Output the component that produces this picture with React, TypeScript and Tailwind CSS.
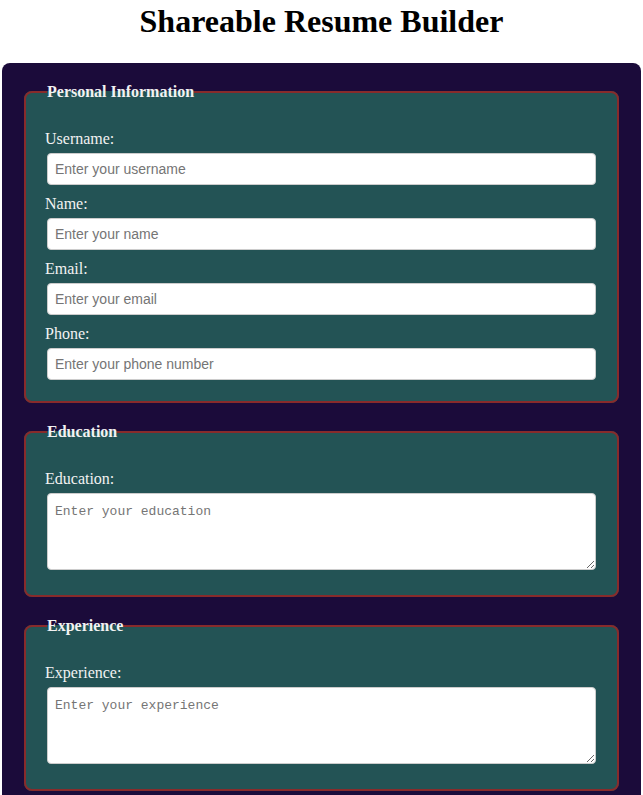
import React from "react";

const serif = { fontFamily: '"Liberation Serif", "Times New Roman", serif' };

function Field({ label, placeholder }: { label: string; placeholder: string }) {
  return (
    <>
      <label className="block mt-[10px] mb-[5px] -ml-[2px] text-[16px] leading-[18px] text-[#f2f2f2]">{label}</label>
      <input
        placeholder={placeholder}
        className="block w-full h-[32px] rounded-[4px] border border-[#cccccc] bg-white px-[7px] text-[14px] text-black placeholder:text-[#757575] outline-none"
        style={{ fontFamily: '"Liberation Sans", Arial, sans-serif' }}
      />
    </>
  );
}

function Area({ label, placeholder }: { label: string; placeholder: string }) {
  return (
    <>
      <label className="block mt-[10px] mb-[5px] -ml-[2px] text-[16px] leading-[18px] text-[#f2f2f2]">{label}</label>
      <textarea
        placeholder={placeholder}
        className="block w-full h-[77px] mb-[4px] rounded-[4px] border border-[#cccccc] bg-white px-[7px] py-[8px] text-[13px] text-black placeholder:text-[#757575] outline-none"
        style={{ fontFamily: '"Liberation Mono", "DejaVu Sans Mono", monospace' }}
      />
    </>
  );
}

function Section({ title, children }: { title: string; children: React.ReactNode }) {
  return (
    <fieldset className="mb-[20px] rounded-[8px] border-2 border-[#882b2b] bg-[#235355] px-[21px] pt-[19px] pb-[21px]">
      <legend className="px-0 text-[16px] font-bold leading-[18px] text-[#f2f2f2]">{title}</legend>
      {children}
    </fieldset>
  );
}

export default function App() {
  return (
    <div className="min-h-[795px] bg-white" style={serif}>
      <h1 className="mt-[3px] mb-[23px] text-center text-[32px] font-bold leading-[37px] text-black">
        Shareable Resume Builder
      </h1>
      <div className="mx-[2px] rounded-[8px] bg-[#1b0b3a] px-[22px] pt-[20px] pb-[20px]">
        <Section title="Personal Information">
          <Field label="Username:" placeholder="Enter your username" />
          <Field label="Name:" placeholder="Enter your name" />
          <Field label="Email:" placeholder="Enter your email" />
          <Field label="Phone:" placeholder="Enter your phone number" />
        </Section>
        <Section title="Education">
          <Area label="Education:" placeholder="Enter your education" />
        </Section>
        <Section title="Experience">
          <Area label="Experience:" placeholder="Enter your experience" />
        </Section>
      </div>
    </div>
  );
}
